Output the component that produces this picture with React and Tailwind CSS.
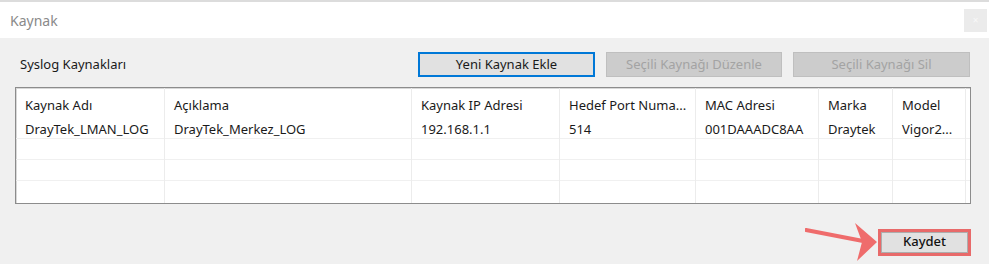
import React from "react";

const cols = [
  { w: "w-[149px]", label: "Kaynak Adı", val: "DrayTek_LMAN_LOG" },
  { w: "w-[247px]", label: "Açıklama", val: "DrayTek_Merkez_LOG" },
  { w: "w-[148px]", label: "Kaynak IP Adresi", val: "192.168.1.1" },
  { w: "w-[136px]", label: "Hedef Port Numa...", val: "514" },
  { w: "w-[123px]", label: "MAC Adresi", val: "001DAAADC8AA" },
  { w: "w-[74px]", label: "Marka", val: "Draytek" },
  { w: "w-[73px]", label: "Model", val: "Vigor2..." },
];

export default function App() {
  return (
    <div
      className="w-[989px] h-[264px] flex flex-col bg-[#f0f0f0] overflow-hidden text-[13px] text-[#1a1a1a]"
      style={{ fontFamily: '"Noto Sans", "Open Sans", sans-serif' }}
    >
      {/* title bar */}
      <div className="h-[38px] shrink-0 bg-white border-t-[2px] border-[#dcdcdc] flex items-center justify-between pl-[10px] pr-[2px]">
        <span className="text-[14px] text-[#8a8a8a]">Kaynak</span>
        <div className="w-[23px] h-[23px] bg-[#ebebeb] flex items-center justify-center text-[10px] text-[#f8f8f8]">
          ×
        </div>
      </div>

      {/* body */}
      <div className="flex-1 flex flex-col pt-[14px] pl-[15px] pr-[18px]">
        <div className="flex items-center h-[25px]">
          <span className="pl-[5px] flex-1">Syslog Kaynakları</span>
          <div className="flex gap-[11px] mr-[1px]">
            <div className="w-[177px] h-[25px] bg-[#e1e1e1] border-2 border-[#0078d7] flex items-center justify-center">
              Yeni Kaynak Ekle
            </div>
            <div className="w-[176px] h-[25px] bg-[#cccccc] border border-[#bfbfbf] flex items-center justify-center text-[#a3a3a3]">
              Seçili Kaynağı Düzenle
            </div>
            <div className="w-[177px] h-[25px] bg-[#cccccc] border border-[#bfbfbf] flex items-center justify-center text-[#a3a3a3]">
              Seçili Kaynağı Sil
            </div>
          </div>
        </div>

        {/* table */}
        <div className="mt-[10px] h-[117px] bg-white border border-[#8c8c8c] shadow-[inset_1px_1px_0_#d8d8d8] flex overflow-hidden">
          {cols.map((c, i) => (
            <div key={i} className={`${c.w} shrink-0 flex flex-col border-r border-[#ececec]`}>
              <div className="h-[30px] flex items-center pl-[9px] pt-[5px] whitespace-nowrap overflow-hidden">
                {c.label}
              </div>
              <div className="h-[21px] flex items-center pl-[9px] pt-[3px] border-b border-[#f0f0f0] whitespace-nowrap">
                {c.val}
              </div>
              <div className="h-[21px] border-b border-[#f0f0f0]" />
              <div className="h-[21px] border-b border-[#f0f0f0]" />
              <div className="h-[21px]" />
            </div>
          ))}
          <div className="flex-1 flex flex-col">
            <div className="h-[30px]" />
            <div className="h-[21px] border-b border-[#f0f0f0]" />
            <div className="h-[21px] border-b border-[#f0f0f0]" />
            <div className="h-[21px] border-b border-[#f0f0f0]" />
          </div>
        </div>

        {/* footer */}
        <div className="mt-[18px] flex items-center justify-end">
          <svg width="73" height="40" viewBox="0 0 73 40" className="block">
            <line x1="1" y1="8" x2="58" y2="19" stroke="#ef6c6c" strokeWidth="4" strokeLinecap="round" />
            <polygon points="50,1 72,20 52,39 57,20" fill="#ef6c6c" />
          </svg>
          <div className="w-[93px] h-[27px] border-[3px] border-[#e86a6a] flex">
            <div className="flex-1 bg-[#e1e1e1] border border-[#adadad] flex items-center justify-center font-medium text-[#111]">
              Kaydet
            </div>
          </div>
        </div>
      </div>
    </div>
  );
}
